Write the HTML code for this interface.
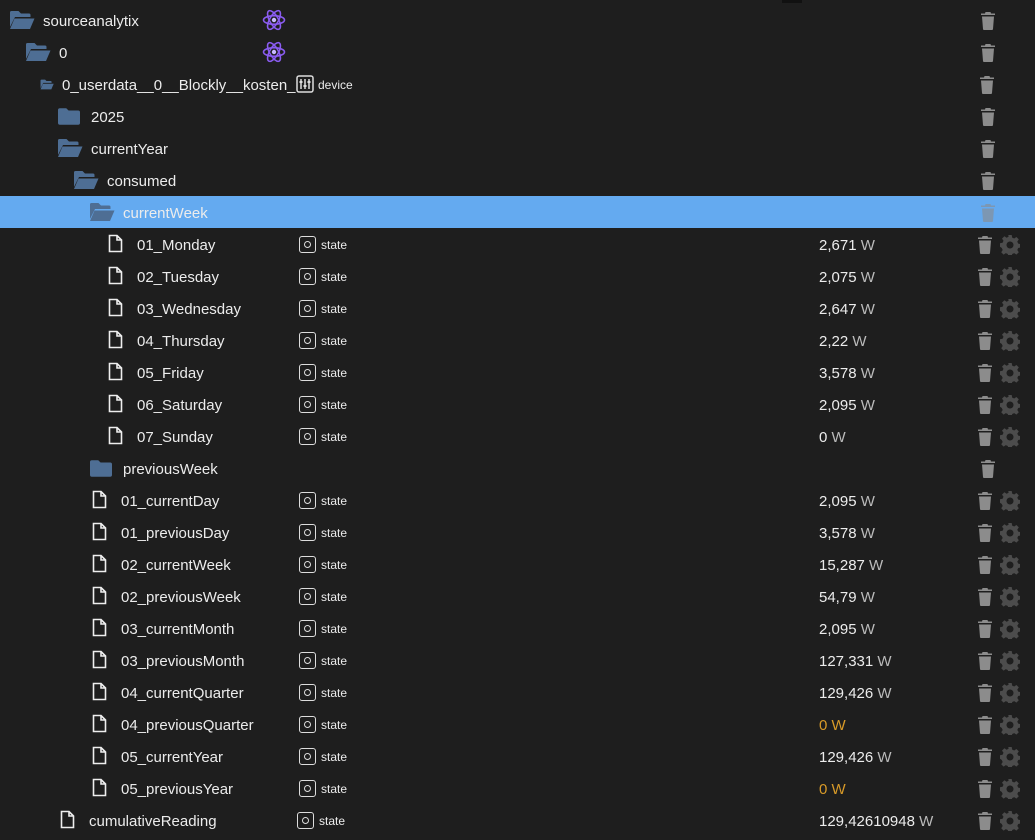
<!DOCTYPE html>
<html><head><meta charset="utf-8"><style>
body{margin:0;width:1035px;height:840px;background:#1e1e1e;overflow:hidden;font-family:"Segoe UI","Liberation Sans",sans-serif;color:#ececec;position:relative}
.r{position:absolute;left:0;width:1035px;height:32px}
.r.sel{background:#64aaf0}
.t{position:absolute;top:9px;font-size:15px;line-height:18px;white-space:nowrap}
.ic{position:absolute}
.st{position:absolute;left:299px;top:8px;width:17px;height:17px;border:1.5px solid #ddd;border-radius:3px;box-sizing:border-box}
.st:after{content:"";position:absolute;left:3.5px;top:3.5px;width:5px;height:5px;border:1.2px solid #ddd;border-radius:50%}
.sl{position:absolute;left:321px;top:10px;font-size:12px}
.v{position:absolute;left:819px;top:9px;font-size:15px}
.v span{color:#bbb}
.o{color:#d89a28}
.tr{position:absolute;top:8px}
.gr{position:absolute;left:1000px;top:7px}
</style></head><body>
<svg width="0" height="0" style="position:absolute">
<defs>
<symbol id="fo" viewBox="0 0 26 20"><path fill="#4e6e94" d="M1 2.5Q1 1 2.5 1h7l2.5 2.5h8Q21.5 3.5 21.5 5v2H6L1 17z"/><path fill="#4e6e94" d="M5.5 8.5H25.5L21 19H1z"/></symbol>
<symbol id="fc" viewBox="0 0 24 18"><path fill="#4e6e94" d="M0 2Q0 0 2 0h7l2.5 2.5H22Q24 2.5 24 4.5V16Q24 18 22 18H2Q0 18 0 16z"/></symbol>
<symbol id="fi" viewBox="0 0 15 19"><path fill="none" stroke="#eee" stroke-width="1.6" d="M1.5 1.5h7.5l4.5 4.5v11.5h-12z M9 1.5v4.5h4.5"/></symbol>
<symbol id="tr" viewBox="0 0 14 18"><path fill="#8c8c8c" d="M4.5 0h5l.5 1.5H14V3H0V1.5h4zM1 4.5h12l-1 12.5Q12 18 11 18H3Q2 18 2 17z"/></symbol>
<symbol id="ge" viewBox="0 0 20 20"><path fill="#4c4c4c" fill-rule="evenodd" d="M8.3 0h3.4l.5 2.6 2 .9 2.2-1.5 2.4 2.4-1.5 2.2.9 2 2.6.5v3.4l-2.6.5-.9 2 1.5 2.2-2.4 2.4-2.2-1.5-2 .9-.5 2.6H8.3l-.5-2.6-2-.9-2.2 1.5-2.4-2.4 1.5-2.2-.9-2L0 11.7V8.3l2.6-.5.9-2L2 3.6 4.4 1.2l2.2 1.5 2-.9zM10 6.5a3.5 3.5 0 1 0 .01 0z"/></symbol>
<symbol id="at" viewBox="0 0 24 24"><g fill="none" stroke="#8a5cf0" stroke-width="1.6"><ellipse cx="12" cy="12" rx="10.5" ry="4.3"/><ellipse cx="12" cy="12" rx="10.5" ry="4.3" transform="rotate(60 12 12)"/><ellipse cx="12" cy="12" rx="10.5" ry="4.3" transform="rotate(120 12 12)"/></g><circle cx="12" cy="12" r="2.2" fill="#c8b8ff"/></symbol>
</defs></svg>

<div style="position:absolute;left:782px;top:0;width:20px;height:3px;background:#111"></div>

<div class="r" style="top:4px"><svg class="ic" style="left:9px;top:6px" width="26" height="20"><use href="#fo"/></svg><div class="t" style="left:43px">sourceanalytix</div><svg class="ic" style="left:262px;top:4px" width="24" height="24"><use href="#at"/></svg><svg class="tr" style="left:981px" width="14" height="18"><use href="#tr"/></svg></div>
<div class="r" style="top:36px"><svg class="ic" style="left:25px;top:6px" width="26" height="20"><use href="#fo"/></svg><div class="t" style="left:59px">0</div><svg class="ic" style="left:262px;top:4px" width="24" height="24"><use href="#at"/></svg><svg class="tr" style="left:981px" width="14" height="18"><use href="#tr"/></svg></div>
<div class="r" style="top:68px"><svg class="ic" style="left:40px;top:11px" width="14" height="11"><use href="#fo"/></svg><div class="t" style="left:62px">0_userdata__0__Blockly__kosten_</div><svg class="ic" style="left:296px;top:7px" width="18" height="18" viewBox="0 0 18 18"><rect x="1" y="1" width="16" height="16" rx="2" fill="none" stroke="#ddd" stroke-width="1.5"/><path d="M5 4v10M9 4v10M13 4v10" stroke="#ddd" stroke-width="1.5"/><rect x="3.5" y="6" width="3" height="2" fill="#ddd"/><rect x="7.5" y="10" width="3" height="2" fill="#ddd"/><rect x="11.5" y="6" width="3" height="2" fill="#ddd"/></svg><div class="sl" style="left:318px">device</div><svg class="tr" style="left:980px" width="14" height="18"><use href="#tr"/></svg></div>
<div class="r" style="top:100px"><svg class="ic" style="left:58px;top:8px" width="22" height="17"><use href="#fc"/></svg><div class="t" style="left:91px">2025</div><svg class="tr" style="left:981px" width="14" height="18"><use href="#tr"/></svg></div>
<div class="r" style="top:132px"><svg class="ic" style="left:57px;top:6px" width="26" height="20"><use href="#fo"/></svg><div class="t" style="left:91px">currentYear</div><svg class="tr" style="left:981px" width="14" height="18"><use href="#tr"/></svg></div>
<div class="r" style="top:164px"><svg class="ic" style="left:73px;top:6px" width="26" height="20"><use href="#fo"/></svg><div class="t" style="left:107px">consumed</div><svg class="tr" style="left:981px" width="14" height="18"><use href="#tr"/></svg></div>
<div class="r sel" style="top:196px"><svg class="ic" style="left:89px;top:6px" width="26" height="20"><use href="#fo"/></svg><div class="t" style="left:123px">currentWeek</div><svg class="tr" style="left:981px;opacity:.6" width="14" height="18"><use href="#tr" style="fill:#fff"/></svg></div>

<div class="r" style="top:228px"><svg class="ic" style="left:108px;top:6px" width="15" height="19"><use href="#fi"/></svg><div class="t" style="left:137px">01_Monday</div><div class="st"></div><div class="sl">state</div><div class="v">2,671 <span>W</span></div><svg class="tr" style="left:978px" width="14" height="18"><use href="#tr"/></svg><svg class="gr" width="20" height="20"><use href="#ge"/></svg></div>
<div class="r" style="top:260px"><svg class="ic" style="left:108px;top:6px" width="15" height="19"><use href="#fi"/></svg><div class="t" style="left:137px">02_Tuesday</div><div class="st"></div><div class="sl">state</div><div class="v">2,075 <span>W</span></div><svg class="tr" style="left:978px" width="14" height="18"><use href="#tr"/></svg><svg class="gr" width="20" height="20"><use href="#ge"/></svg></div>
<div class="r" style="top:292px"><svg class="ic" style="left:108px;top:6px" width="15" height="19"><use href="#fi"/></svg><div class="t" style="left:137px">03_Wednesday</div><div class="st"></div><div class="sl">state</div><div class="v">2,647 <span>W</span></div><svg class="tr" style="left:978px" width="14" height="18"><use href="#tr"/></svg><svg class="gr" width="20" height="20"><use href="#ge"/></svg></div>
<div class="r" style="top:324px"><svg class="ic" style="left:108px;top:6px" width="15" height="19"><use href="#fi"/></svg><div class="t" style="left:137px">04_Thursday</div><div class="st"></div><div class="sl">state</div><div class="v">2,22 <span>W</span></div><svg class="tr" style="left:978px" width="14" height="18"><use href="#tr"/></svg><svg class="gr" width="20" height="20"><use href="#ge"/></svg></div>
<div class="r" style="top:356px"><svg class="ic" style="left:108px;top:6px" width="15" height="19"><use href="#fi"/></svg><div class="t" style="left:137px">05_Friday</div><div class="st"></div><div class="sl">state</div><div class="v">3,578 <span>W</span></div><svg class="tr" style="left:978px" width="14" height="18"><use href="#tr"/></svg><svg class="gr" width="20" height="20"><use href="#ge"/></svg></div>
<div class="r" style="top:388px"><svg class="ic" style="left:108px;top:6px" width="15" height="19"><use href="#fi"/></svg><div class="t" style="left:137px">06_Saturday</div><div class="st"></div><div class="sl">state</div><div class="v">2,095 <span>W</span></div><svg class="tr" style="left:978px" width="14" height="18"><use href="#tr"/></svg><svg class="gr" width="20" height="20"><use href="#ge"/></svg></div>
<div class="r" style="top:420px"><svg class="ic" style="left:108px;top:6px" width="15" height="19"><use href="#fi"/></svg><div class="t" style="left:137px">07_Sunday</div><div class="st"></div><div class="sl">state</div><div class="v">0 <span>W</span></div><svg class="tr" style="left:978px" width="14" height="18"><use href="#tr"/></svg><svg class="gr" width="20" height="20"><use href="#ge"/></svg></div>

<div class="r" style="top:452px"><svg class="ic" style="left:90px;top:8px" width="22" height="17"><use href="#fc"/></svg><div class="t" style="left:123px">previousWeek</div><svg class="tr" style="left:981px" width="14" height="18"><use href="#tr"/></svg></div>

<div class="r" style="top:484px"><svg class="ic" style="left:92px;top:6px" width="15" height="19"><use href="#fi"/></svg><div class="t" style="left:121px">01_currentDay</div><div class="st"></div><div class="sl">state</div><div class="v">2,095 <span>W</span></div><svg class="tr" style="left:978px" width="14" height="18"><use href="#tr"/></svg><svg class="gr" width="20" height="20"><use href="#ge"/></svg></div>
<div class="r" style="top:516px"><svg class="ic" style="left:92px;top:6px" width="15" height="19"><use href="#fi"/></svg><div class="t" style="left:121px">01_previousDay</div><div class="st"></div><div class="sl">state</div><div class="v">3,578 <span>W</span></div><svg class="tr" style="left:978px" width="14" height="18"><use href="#tr"/></svg><svg class="gr" width="20" height="20"><use href="#ge"/></svg></div>
<div class="r" style="top:548px"><svg class="ic" style="left:92px;top:6px" width="15" height="19"><use href="#fi"/></svg><div class="t" style="left:121px">02_currentWeek</div><div class="st"></div><div class="sl">state</div><div class="v">15,287 <span>W</span></div><svg class="tr" style="left:978px" width="14" height="18"><use href="#tr"/></svg><svg class="gr" width="20" height="20"><use href="#ge"/></svg></div>
<div class="r" style="top:580px"><svg class="ic" style="left:92px;top:6px" width="15" height="19"><use href="#fi"/></svg><div class="t" style="left:121px">02_previousWeek</div><div class="st"></div><div class="sl">state</div><div class="v">54,79 <span>W</span></div><svg class="tr" style="left:978px" width="14" height="18"><use href="#tr"/></svg><svg class="gr" width="20" height="20"><use href="#ge"/></svg></div>
<div class="r" style="top:612px"><svg class="ic" style="left:92px;top:6px" width="15" height="19"><use href="#fi"/></svg><div class="t" style="left:121px">03_currentMonth</div><div class="st"></div><div class="sl">state</div><div class="v">2,095 <span>W</span></div><svg class="tr" style="left:978px" width="14" height="18"><use href="#tr"/></svg><svg class="gr" width="20" height="20"><use href="#ge"/></svg></div>
<div class="r" style="top:644px"><svg class="ic" style="left:92px;top:6px" width="15" height="19"><use href="#fi"/></svg><div class="t" style="left:121px">03_previousMonth</div><div class="st"></div><div class="sl">state</div><div class="v">127,331 <span>W</span></div><svg class="tr" style="left:978px" width="14" height="18"><use href="#tr"/></svg><svg class="gr" width="20" height="20"><use href="#ge"/></svg></div>
<div class="r" style="top:676px"><svg class="ic" style="left:92px;top:6px" width="15" height="19"><use href="#fi"/></svg><div class="t" style="left:121px">04_currentQuarter</div><div class="st"></div><div class="sl">state</div><div class="v">129,426 <span>W</span></div><svg class="tr" style="left:978px" width="14" height="18"><use href="#tr"/></svg><svg class="gr" width="20" height="20"><use href="#ge"/></svg></div>
<div class="r" style="top:708px"><svg class="ic" style="left:92px;top:6px" width="15" height="19"><use href="#fi"/></svg><div class="t" style="left:121px">04_previousQuarter</div><div class="st"></div><div class="sl">state</div><div class="v o">0 W</div><svg class="tr" style="left:978px" width="14" height="18"><use href="#tr"/></svg><svg class="gr" width="20" height="20"><use href="#ge"/></svg></div>
<div class="r" style="top:740px"><svg class="ic" style="left:92px;top:6px" width="15" height="19"><use href="#fi"/></svg><div class="t" style="left:121px">05_currentYear</div><div class="st"></div><div class="sl">state</div><div class="v">129,426 <span>W</span></div><svg class="tr" style="left:978px" width="14" height="18"><use href="#tr"/></svg><svg class="gr" width="20" height="20"><use href="#ge"/></svg></div>
<div class="r" style="top:772px"><svg class="ic" style="left:92px;top:6px" width="15" height="19"><use href="#fi"/></svg><div class="t" style="left:121px">05_previousYear</div><div class="st"></div><div class="sl">state</div><div class="v o">0 W</div><svg class="tr" style="left:978px" width="14" height="18"><use href="#tr"/></svg><svg class="gr" width="20" height="20"><use href="#ge"/></svg></div>
<div class="r" style="top:804px"><svg class="ic" style="left:60px;top:6px" width="15" height="19"><use href="#fi"/></svg><div class="t" style="left:89px">cumulativeReading</div><div class="st" style="left:297px"></div><div class="sl" style="left:319px">state</div><div class="v">129,42610948 <span>W</span></div><svg class="tr" style="left:978px" width="14" height="18"><use href="#tr"/></svg><svg class="gr" width="20" height="20"><use href="#ge"/></svg></div>
</body></html>
